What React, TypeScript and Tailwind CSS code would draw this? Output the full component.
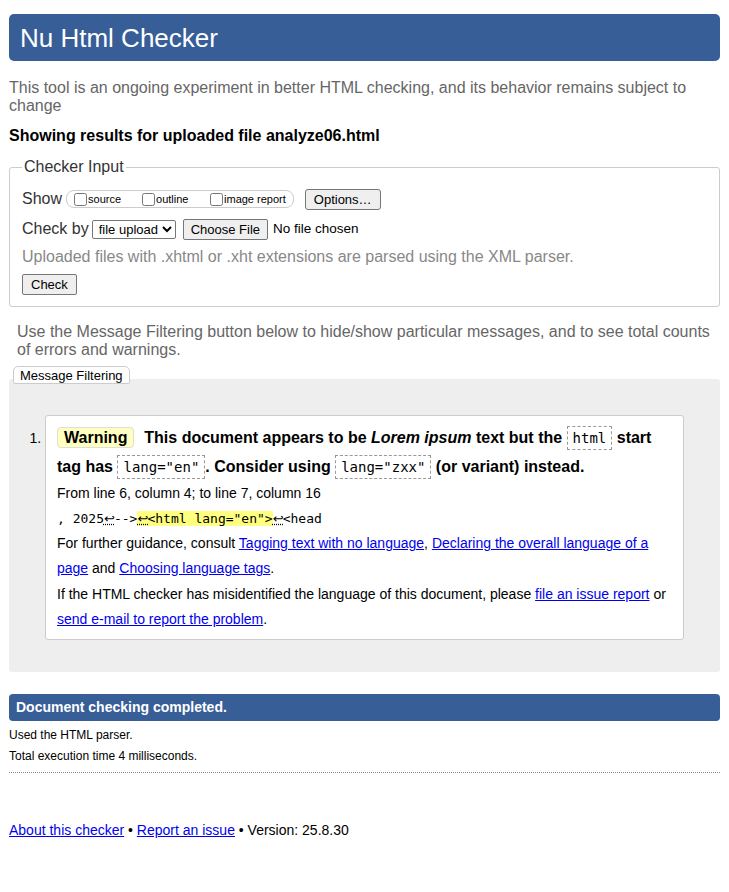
import React from 'react';

function Code({ children }: { children: React.ReactNode }) {
  return (
    <code className="border border-dashed border-[#999] px-[5px] py-[3px] font-['DejaVu_Sans_Mono',monospace] text-[14px] font-normal leading-none">
      {children}
    </code>
  );
}

function Lf() {
  return (
    <span className="inline-block w-[10px] text-center font-['DejaVu_Sans',sans-serif] text-[13px] leading-none underline decoration-dotted">
      ↩
    </span>
  );
}

export default function App() {
  return (
    <div className="min-h-[892px] bg-white px-[9px] pt-[14px] font-['Liberation_Sans',Arial,sans-serif] text-black">
      <header className="flex h-[47px] items-center rounded-[5px] bg-[#375e97] px-[11px]">
        <h1 className="text-[26px] leading-none text-white">Nu Html Checker</h1>
      </header>

      <p className="mt-[18px] text-[16px] leading-[18px] text-[#666]">
        This tool is an ongoing experiment in better HTML checking, and its behavior remains subject to change
      </p>
      <p className="mt-[12px] text-[16px] font-bold leading-[18px]">
        Showing results for uploaded file analyze06.html
      </p>

      <fieldset className="mt-[10px] rounded-[3px] border border-[#ccc] px-[12px] pb-[10px] pt-[8px]">
        <legend className="px-[2px] text-[16px] text-[#333]">Checker Input</legend>
        <div className="flex h-[24px] items-center">
          <span className="text-[16px] text-[#333]">Show</span>
          <div className="ml-[4px] flex h-[18px] items-center whitespace-nowrap rounded-[8px] border border-[#ccc] pl-[7px] pr-[7px] text-[11px]">
            <label className="flex w-[68px] shrink-0 items-center gap-[1px]">
              <input type="checkbox" className="m-0 h-[13px] w-[13px]" />
              source
            </label>
            <label className="flex w-[68px] shrink-0 items-center gap-[1px]">
              <input type="checkbox" className="m-0 h-[13px] w-[13px]" />
              outline
            </label>
            <label className="flex shrink-0 items-center gap-[1px]">
              <input type="checkbox" className="m-0 h-[13px] w-[13px]" />
              image report
            </label>
          </div>
          <button className="ml-[11px] h-[21px] rounded-[3px] border border-[#767676] bg-[#efefef] px-[8px] text-[13px]">
            Options…
          </button>
        </div>
        <div className="mt-[6px] flex h-[24px] items-center">
          <span className="text-[16px] text-[#333]">Check by</span>
          <select className="ml-[3px] h-[19px] rounded-[2px] border border-[#767676] bg-white pl-[2px] text-[13px]">
            <option>file upload</option>
          </select>
          <button className="ml-[7px] h-[21px] rounded-[2px] border border-[#767676] bg-[#efefef] px-[7px] text-[13px]">
            Choose File
          </button>
          <span className="ml-[5px] text-[13.5px]">No file chosen</span>
        </div>
        <p className="mt-[6px] text-[16px] leading-[20px] text-[#888]">
          Uploaded files with .xhtml or .xht extensions are parsed using the XML parser.
        </p>
        <button className="mt-[7px] h-[21px] rounded-[2px] border border-[#767676] bg-[#efefef] px-[8px] text-[13px]">
          Check
        </button>
      </fieldset>

      <p className="mt-[16px] px-[8px] text-[16px] leading-[18px] text-[#666]">
        Use the Message Filtering button below to hide/show particular messages, and to see total counts of errors and warnings.
      </p>

      <div className="mt-[7px]">
        <button className="relative z-10 ml-[4px] block h-[18px] rounded-t-[5px] rounded-b-[2px] border border-[#ccc] bg-white px-[6px] text-[13px] leading-none">
          Message Filtering
        </button>
        <div className="-mt-[5px] rounded-[3px] bg-[#eee] px-[36px] pb-[32px] pt-[36px]">
          <ol className="list-decimal">
            <li className="rounded-[3px] border border-[#ccc] bg-white px-[11px] py-[7px] text-[14px] leading-[25px] marker:text-[14px]">
              <p className="text-[16px] font-bold leading-[29px]">
                <span className="mr-[1px] rounded-[4px] border border-[#ddd] bg-[#ffffc0] px-[6px] py-[1px]">Warning</span>
                &nbsp; This document appears to be <em>Lorem ipsum</em> text but the <Code>html</Code> start tag has{' '}
                <Code>lang="en"</Code>. Consider using <Code>lang="zxx"</Code> (or variant) instead.
              </p>
              <p>From line 6, column 4; to line 7, column 16</p>
              <p className="font-['DejaVu_Sans_Mono',monospace] text-[13px]">
                , 2025<Lf />--&gt;
                <span className="bg-[#ffff80]">
                  <Lf />&lt;html lang="en"&gt;
                </span>
                <Lf />&lt;head
              </p>
              <p>
                For further guidance, consult <a href="#" className="text-[#00e] underline">Tagging text with no language</a>,{' '}
                <a href="#" className="text-[#00e] underline">Declaring the overall language of a page</a> and{' '}
                <a href="#" className="text-[#00e] underline">Choosing language tags</a>.
              </p>
              <p className="mt-[1px]">
                If the HTML checker has misidentified the language of this document, please{' '}
                <a href="#" className="text-[#00e] underline">file an issue report</a> or{' '}
                <a href="#" className="text-[#00e] underline">send e-mail to report the problem</a>.
              </p>
            </li>
          </ol>
        </div>
      </div>

      <div className="mt-[22px] flex h-[27px] items-center rounded-[4px] bg-[#375e97] px-[7px]">
        <span className="text-[14px] font-bold text-white">Document checking completed.</span>
      </div>
      <p className="mt-[6px] text-[12px] leading-[16px]">Used the HTML parser.</p>
      <p className="mt-[5px] text-[12px] leading-[16px]">Total execution time 4 milliseconds.</p>
      <div className="mt-[8px] border-b border-dotted border-[#888]" />

      <p className="mt-[48px] text-[14px] leading-[18px]">
        <a href="#" className="text-[#00e] underline">About this checker</a> •{' '}
        <a href="#" className="text-[#00e] underline">Report an issue</a> • Version: 25.8.30
      </p>
    </div>
  );
}
